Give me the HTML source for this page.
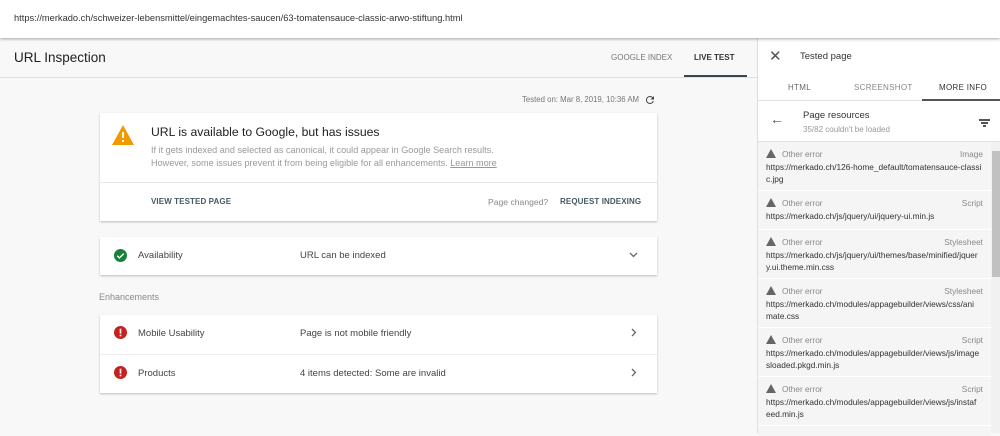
<!DOCTYPE html>
<html><head><style>
*{margin:0;padding:0;box-sizing:border-box}
body{width:1000px;height:433px;overflow:hidden;font-family:"Liberation Sans",sans-serif;background:#f8f8f8;position:relative;color:#212121}
.abs{position:absolute;white-space:nowrap}
.top{left:0;top:0;width:1000px;height:38px;background:#fff;box-shadow:0 1px 3px rgba(0,0,0,.35);z-index:3}
.card{background:#fff;box-shadow:0 1px 2px rgba(0,0,0,.25);position:absolute}
.right{left:757px;top:38px;width:243px;height:395px;background:#fff;border-left:1px solid #ddd;z-index:2}
.item{position:absolute;left:0;width:233px;background:#f5f5f5;font-size:8.3px;color:#333;padding:6px 8px 0 8px;line-height:12px;white-space:nowrap;overflow:hidden}
.item .h{color:#888;display:flex;justify-content:space-between;margin-bottom:1px}
.tri{display:inline-block;width:0;height:0;border-left:5px solid transparent;border-right:5px solid transparent;border-bottom:9px solid #666;vertical-align:-1px;margin-right:6px}
.btn{font-size:8px;font-weight:bold;color:#455a64;letter-spacing:.1px}
</style></head><body>
<div class="abs top"><div class="abs" style="left:14px;top:13px;font-size:9.3px;color:#333">https://merkado.ch/schweizer-lebensmittel/eingemachtes-saucen/63-tomatensauce-classic-arwo-stiftung.html</div></div>
<div class="abs" style="left:0;top:38px;width:757px;height:40px;border-bottom:1px solid #e0e0e0;background:#f8f8f8"></div>
<div class="abs" style="left:14px;top:50px;font-size:13.5px;color:#212121">URL Inspection</div>
<div class="abs" style="left:611px;top:53px;font-size:8px;color:#777">GOOGLE INDEX</div>
<div class="abs" style="left:694px;top:53px;font-size:8px;color:#333;font-weight:bold">LIVE TEST</div>
<div class="abs" style="left:684px;top:75px;width:63px;height:2px;background:#37474f"></div>
<div class="abs" style="left:522px;top:95px;font-size:7.8px;color:#777">Tested on: Mar 8, 2019, 10:36 AM</div>
<svg class="abs" style="left:644px;top:94px" width="12" height="12" viewBox="0 0 24 24"><path d="M17.6 6.4A8 8 0 1 0 19.7 14h-2.1A6 6 0 1 1 12 6c1.7 0 3.1.7 4.2 1.8L13 11h7V4z" fill="#444"/></svg>
<div class="card" style="left:100px;top:113px;width:557px;height:108px">
<svg class="abs" style="left:12px;top:12px" width="22" height="20" viewBox="0 0 22 20"><path d="M11 0L22 20H0z" fill="#f29900"/><rect x="10" y="7" width="2" height="6" fill="#fff"/><rect x="10" y="15" width="2" height="2" fill="#fff"/></svg>
<div class="abs" style="left:51px;top:12px;font-size:12.2px;color:#212121">URL is available to Google, but has issues</div>
<div class="abs" style="left:51px;top:31px;font-size:9.1px;color:#999;line-height:13px">If it gets indexed and selected as canonical, it could appear in Google Search results.<br>However, some issues prevent it from being eligible for all enhancements. <u>Learn more</u></div>
<div class="abs" style="left:0;top:69px;width:557px;height:1px;background:#e8e8e8"></div>
<div class="abs btn" style="left:51px;top:84px">VIEW TESTED PAGE</div>
<div class="abs" style="left:388px;top:84px;font-size:8.6px;color:#888">Page changed?</div>
<div class="abs btn" style="left:460px;top:84px">REQUEST INDEXING</div>
</div>
<div class="card" style="left:100px;top:237px;width:557px;height:38px;font-size:9.5px;color:#444">
<svg class="abs" style="left:14px;top:12px" width="13" height="13" viewBox="0 0 24 24"><circle cx="12" cy="12" r="12" fill="#188038"/><path d="M6 12.5l4 4 8-8" stroke="#fff" stroke-width="2.6" fill="none"/></svg>
<div class="abs" style="left:38px;top:13px">Availability</div>
<div class="abs" style="left:200px;top:13px">URL can be indexed</div>
<svg class="abs" style="left:529px;top:15px" width="9" height="6" viewBox="0 0 9 6"><path d="M1 1l3.5 3.5L8 1" stroke="#666" stroke-width="1.3" fill="none"/></svg>
</div>
<div class="abs" style="left:99px;top:292px;font-size:9px;color:#888">Enhancements</div>
<div class="card" style="left:100px;top:315px;width:557px;height:78px;font-size:9.5px;color:#444">
<svg class="abs" style="left:14px;top:11px" width="13" height="13" viewBox="0 0 24 24"><circle cx="12" cy="12" r="12" fill="#c5221f"/><rect x="10.5" y="5" width="3" height="9" fill="#fff"/><rect x="10.5" y="16" width="3" height="3" fill="#fff"/></svg>
<div class="abs" style="left:38px;top:13px">Mobile Usability</div>
<div class="abs" style="left:200px;top:13px">Page is not mobile friendly</div>
<svg class="abs" style="left:531px;top:13px" width="6" height="9" viewBox="0 0 6 9"><path d="M1 1l3.5 3.5L1 8" stroke="#666" stroke-width="1.3" fill="none"/></svg>
<div class="abs" style="left:0;top:39px;width:557px;height:1px;background:#eee"></div>
<svg class="abs" style="left:14px;top:51px" width="13" height="13" viewBox="0 0 24 24"><circle cx="12" cy="12" r="12" fill="#c5221f"/><rect x="10.5" y="5" width="3" height="9" fill="#fff"/><rect x="10.5" y="16" width="3" height="3" fill="#fff"/></svg>
<div class="abs" style="left:38px;top:53px">Products</div>
<div class="abs" style="left:200px;top:53px">4 items detected: Some are invalid</div>
<svg class="abs" style="left:531px;top:53px" width="6" height="9" viewBox="0 0 6 9"><path d="M1 1l3.5 3.5L1 8" stroke="#666" stroke-width="1.3" fill="none"/></svg>
</div>
<div class="abs right">
<div class="abs" style="left:11px;top:9px;font-size:15px;color:#555">&#x2715;</div>
<div class="abs" style="left:42px;top:13px;font-size:9.5px;color:#333">Tested page</div>
<div class="abs" style="left:0;top:38px;width:243px;height:25px;border-bottom:1px solid #e0e0e0"></div>
<div class="abs" style="left:30px;top:45px;font-size:8px;color:#666;letter-spacing:.3px">HTML</div>
<div class="abs" style="left:96px;top:45px;font-size:8px;color:#888;letter-spacing:.3px">SCREENSHOT</div>
<div class="abs" style="left:181px;top:45px;font-size:8px;color:#333;letter-spacing:.3px">MORE INFO</div>
<div class="abs" style="left:164px;top:61px;width:79px;height:2px;background:#555"></div>
<div class="abs" style="left:12px;top:73px;font-size:14px;color:#555">&#x2190;</div>
<div class="abs" style="left:45px;top:72px;font-size:9.5px;color:#333">Page resources</div>
<div class="abs" style="left:45px;top:87px;font-size:8px;color:#999">35/82 couldn't be loaded</div>
<div class="abs" style="left:221px;top:81px;width:11px;height:1.5px;background:#555"></div>
<div class="abs" style="left:223px;top:84px;width:7px;height:1.5px;background:#555"></div>
<div class="abs" style="left:225px;top:87px;width:3px;height:1.5px;background:#555"></div>
<div class="abs" style="left:0;top:103px;width:243px;height:1px;background:#e0e0e0"></div>
<div class="item" style="top:104px;height:48px"><div class="h"><span><i class="tri"></i>Other error</span><span>Image</span></div>https://merkado.ch/126-home_default/tomatensauce-classi<br>c.jpg</div>
<div class="item" style="top:153px;height:38px"><div class="h"><span><i class="tri"></i>Other error</span><span>Script</span></div>https://merkado.ch/js/jquery/ui/jquery-ui.min.js</div>
<div class="item" style="top:192px;height:48px"><div class="h"><span><i class="tri"></i>Other error</span><span>Stylesheet</span></div>https://merkado.ch/js/jquery/ui/themes/base/minified/jquer<br>y.ui.theme.min.css</div>
<div class="item" style="top:241px;height:48px"><div class="h"><span><i class="tri"></i>Other error</span><span>Stylesheet</span></div>https://merkado.ch/modules/appagebuilder/views/css/ani<br>mate.css</div>
<div class="item" style="top:290px;height:48px"><div class="h"><span><i class="tri"></i>Other error</span><span>Script</span></div>https://merkado.ch/modules/appagebuilder/views/js/image<br>sloaded.pkgd.min.js</div>
<div class="item" style="top:339px;height:48px"><div class="h"><span><i class="tri"></i>Other error</span><span>Script</span></div>https://merkado.ch/modules/appagebuilder/views/js/instaf<br>eed.min.js</div>
<div class="item" style="top:388px;height:10px"></div>
<div class="abs" style="left:233px;top:104px;width:10px;height:291px;background:#f1f1f1"></div>
<div class="abs" style="left:234px;top:113px;width:8px;height:126px;background:#c1c1c1"></div>
</div>
</body></html>
